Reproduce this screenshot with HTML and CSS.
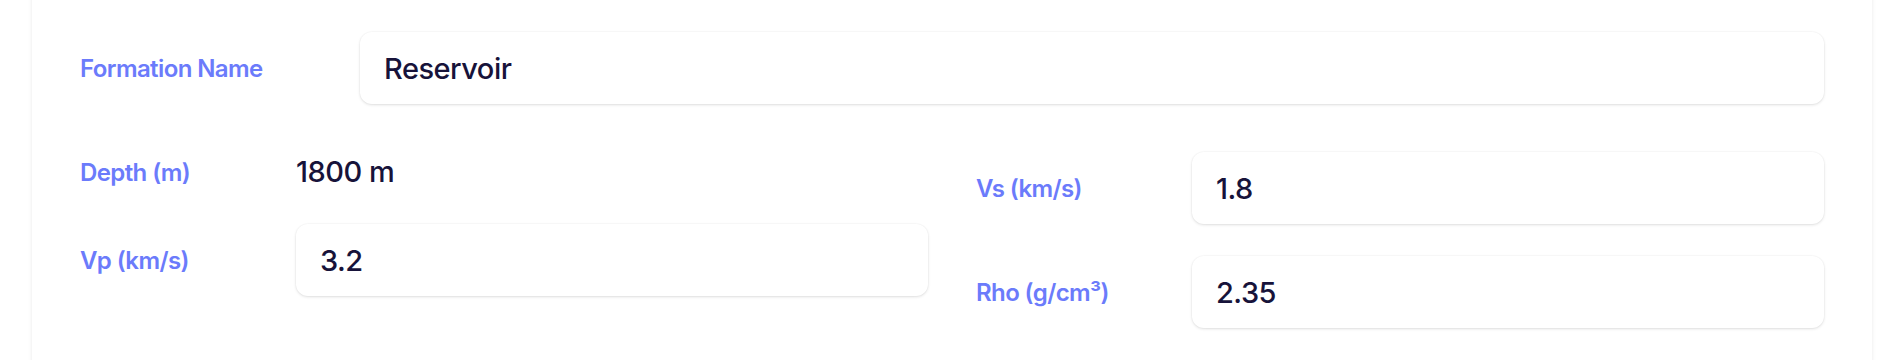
FILE: index.html
```html
<!DOCTYPE html>
<html lang="en">
<head>
<meta charset="utf-8">
<title>Formation</title>
<link rel="stylesheet" href="styles.css">
</head>
<body>
<div class="panel">
  <div class="field field-wide">
    <span class="label label-wide">Formation Name</span>
    <div class="input">Reservoir</div>
  </div>
  <div class="grid">
    <div class="col">
      <div class="field">
        <span class="label">Depth (m)</span>
        <span class="value">1800 m</span>
      </div>
      <div class="field">
        <span class="label">Vp (km/s)</span>
        <div class="input">3.2</div>
      </div>
    </div>
    <div class="col">
      <div class="field">
        <span class="label">Vs (km/s)</span>
        <div class="input">1.8</div>
      </div>
      <div class="field">
        <span class="label">Rho (g/cm³)</span>
        <div class="input">2.35</div>
      </div>
    </div>
  </div>
</div>
</body>
</html>
```
FILE: styles.css
```css
html, body {
  margin: 0;
  background: #ffffff;
  font-family: Inter, "Noto Sans", sans-serif;
}
.panel {
  margin: -10px 32px 0;
  padding: 42px 48px 48px;
  min-height: 400px;
  background: #ffffff;
  box-shadow: 0 0 4px rgba(0, 0, 0, 0.09);
}
.field {
  display: flex;
  align-items: center;
}
.label {
  flex: 0 0 216px;
  color: #6b7bfb;
  font-size: 24px;
  font-weight: 600;
  letter-spacing: -0.6px;
}
.label-wide {
  flex-basis: 280px;
}
.input {
  flex: 1;
  height: 72px;
  box-sizing: border-box;
  padding: 0 24px;
  display: flex;
  align-items: center;
  background: #ffffff;
  border-radius: 12px;
  box-shadow: 0 1px 3px rgba(0, 0, 0, 0.12), 0 0 0 1px rgba(0, 0, 0, 0.015);
  color: #17133a;
  font-size: 29px;
  font-weight: 500;
  letter-spacing: -0.5px;
}
.value {
  color: #17133a;
  font-size: 29px;
  font-weight: 500;
  line-height: 40px;
  letter-spacing: -0.5px;
}
.grid {
  margin-top: 48px;
  display: grid;
  grid-template-columns: 1fr 1fr;
  column-gap: 48px;
}
.col {
  display: flex;
  flex-direction: column;
  gap: 32px;
}
```
